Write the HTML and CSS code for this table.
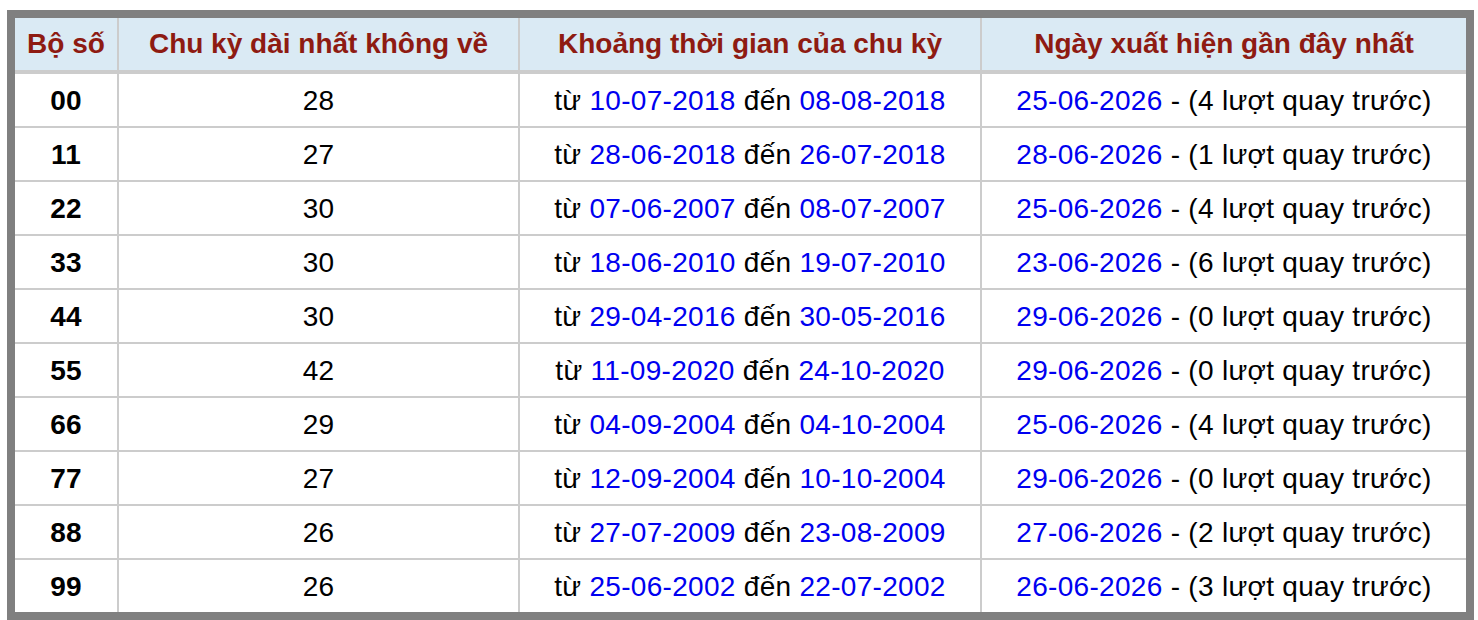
FILE: index.html
```html
<!DOCTYPE html>
<html lang="vi">
<head>
<meta charset="utf-8">
<link rel="stylesheet" href="styles.css">
</head>
<body>
<table class="stats">
  <colgroup>
    <col class="c1"><col class="c2"><col class="c3"><col class="c4">
  </colgroup>
  <thead>
    <tr><th>Bộ số</th><th>Chu kỳ dài nhất không về</th><th>Khoảng thời gian của chu kỳ</th><th>Ngày xuất hiện gần đây nhất</th></tr>
  </thead>
  <tbody>
    <tr><td class="num">00</td><td>28</td><td>từ <span class="d">10-07-2018</span> đến <span class="d">08-08-2018</span></td><td><span class="d">25-06-2026</span> - (4 lượt quay trước)</td></tr>
    <tr><td class="num">11</td><td>27</td><td>từ <span class="d">28-06-2018</span> đến <span class="d">26-07-2018</span></td><td><span class="d">28-06-2026</span> - (1 lượt quay trước)</td></tr>
    <tr><td class="num">22</td><td>30</td><td>từ <span class="d">07-06-2007</span> đến <span class="d">08-07-2007</span></td><td><span class="d">25-06-2026</span> - (4 lượt quay trước)</td></tr>
    <tr><td class="num">33</td><td>30</td><td>từ <span class="d">18-06-2010</span> đến <span class="d">19-07-2010</span></td><td><span class="d">23-06-2026</span> - (6 lượt quay trước)</td></tr>
    <tr><td class="num">44</td><td>30</td><td>từ <span class="d">29-04-2016</span> đến <span class="d">30-05-2016</span></td><td><span class="d">29-06-2026</span> - (0 lượt quay trước)</td></tr>
    <tr><td class="num">55</td><td>42</td><td>từ <span class="d">11-09-2020</span> đến <span class="d">24-10-2020</span></td><td><span class="d">29-06-2026</span> - (0 lượt quay trước)</td></tr>
    <tr><td class="num">66</td><td>29</td><td>từ <span class="d">04-09-2004</span> đến <span class="d">04-10-2004</span></td><td><span class="d">25-06-2026</span> - (4 lượt quay trước)</td></tr>
    <tr><td class="num">77</td><td>27</td><td>từ <span class="d">12-09-2004</span> đến <span class="d">10-10-2004</span></td><td><span class="d">29-06-2026</span> - (0 lượt quay trước)</td></tr>
    <tr><td class="num">88</td><td>26</td><td>từ <span class="d">27-07-2009</span> đến <span class="d">23-08-2009</span></td><td><span class="d">27-06-2026</span> - (2 lượt quay trước)</td></tr>
    <tr><td class="num">99</td><td>26</td><td>từ <span class="d">25-06-2002</span> đến <span class="d">22-07-2002</span></td><td><span class="d">26-06-2026</span> - (3 lượt quay trước)</td></tr>
  </tbody>
</table>
</body>
</html>
```
FILE: styles.css
```css
html, body {
  margin: 0;
  padding: 0;
  background: #ffffff;
}
body {
  padding: 10px 0 0 7px;
  font-family: "Liberation Sans", Arial, Helvetica, sans-serif;
}
.stats {
  width: 1467px;
  table-layout: fixed;
  border-collapse: separate;
  border-spacing: 0;
  border: 8px solid #808080;
  background: #ffffff;
}
.c1 { width: 104px; }
.c2 { width: 401px; }
.c3 { width: 462px; }
.c4 { width: 484px; }
.stats th,
.stats td {
  box-sizing: border-box;
  padding: 0;
  text-align: center;
  vertical-align: middle;
  white-space: nowrap;
  border-right: 2px solid #cccccc;
  border-bottom: 2px solid #cccccc;
  font-size: 28px;
  color: #000000;
}
.stats th:last-child,
.stats td:last-child {
  border-right: none;
}
.stats tbody tr:last-child td {
  border-bottom: none;
}
.stats th {
  height: 56px;
  border-bottom-width: 4px;
  background: #daeaf4;
  color: #8e1b12;
  font-weight: bold;
}
.stats td {
  height: 54px;
  padding-top: 2px;
  letter-spacing: 0.3px;
}
.stats tbody tr:last-child td {
  height: 52px;
}
.num {
  font-weight: bold;
}
.d {
  color: #0000f0;
}
```
